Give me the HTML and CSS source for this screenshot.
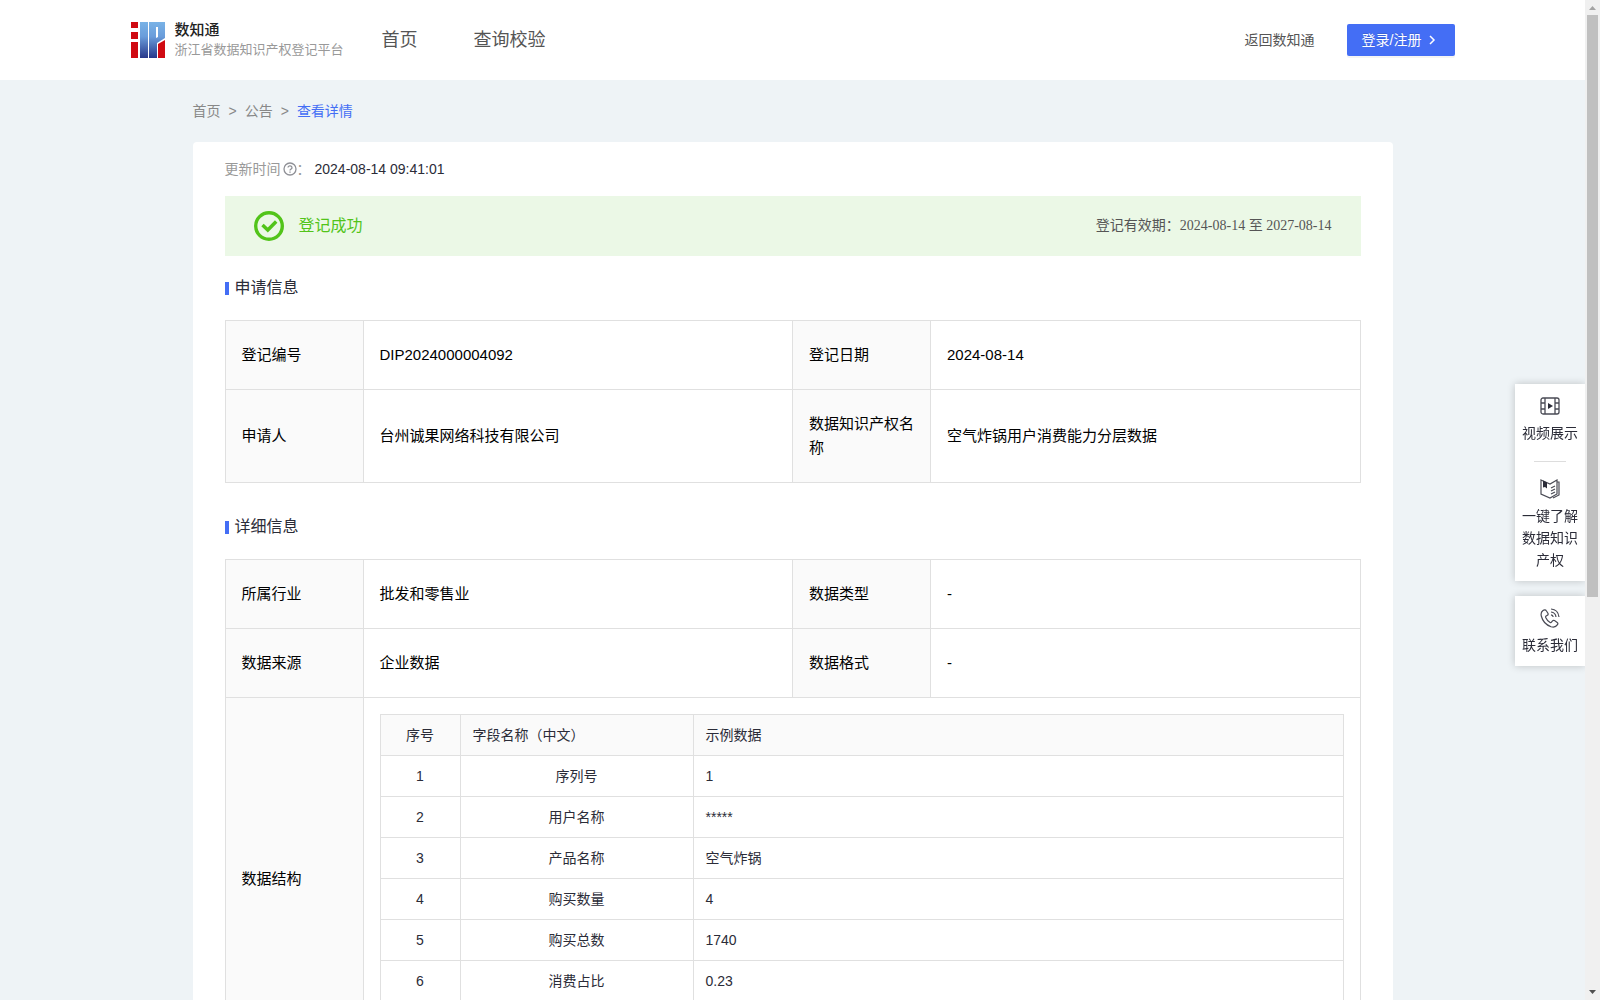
FILE: index.html
```html
<!DOCTYPE html>
<html lang="zh-CN">
<head>
	<meta charset="utf-8">
	<title>浙江省数据知识产权登记平台</title>
	<link rel="stylesheet" href="styles.css">
</head>
<body>
	<div class="page">
		<header class="header">
			<div class="header-inner">
				<a class="logo" href="#">
					<svg class="logo-img" viewBox="0 0 34 36">
						<defs>
							<linearGradient id="blue" x1="0" y1="0" x2="0" y2="36" gradientUnits="userSpaceOnUse">
								<stop offset="0" stop-color="#79b2e6"/>
								<stop offset="0.4" stop-color="#6a9ddb"/>
								<stop offset="1" stop-color="#27378a"/>
							</linearGradient>
						</defs>
						<path fill="#d00a12" d="M0 0h7v6H0zM0 10h7v7H0zM0 20h7v16H0zM34 18v18h-7V22z"/>
						<path fill="url(#blue)" d="M9 0h8v36H9z"/>
						<path fill="url(#blue)" fill-rule="evenodd" d="M18 0h16v16l-8 5v15h-8zM25 5v11l2-1V5z"/>
					</svg>
					<span class="logo-text">
						<strong class="logo-name">数知通</strong>
						<span class="logo-sub">浙江省数据知识产权登记平台</span>
					</span>
				</a>
				<nav class="nav">
					<a href="#">首页</a>
					<a href="#">查询校验</a>
				</nav>
				<div class="header-right">
					<a class="back" href="#">返回数知通</a>
					<button class="login" type="button">登录/注册<svg class="login-arrow" viewBox="0 0 14 14"><path d="M4 3l4 4-4 4" fill="none" stroke="#fff" stroke-width="1.500"/></svg></button>
				</div>
			</div>
		</header>

		<main class="container">
			<nav class="crumb">
				<a href="#">首页</a>
				<span class="sep">&gt;</span>
				<a href="#">公告</a>
				<span class="sep">&gt;</span>
				<a class="current" href="#">查看详情</a>
			</nav>

			<div class="card">
				<div class="update">
					<span class="update-label">更新时间</span>
					<svg class="update-icon" viewBox="0 0 14 14" fill="none" stroke="#8f9096" stroke-width="1.300">
						<circle cx="7" cy="7" r="6"/>
						<path d="M5 5.600a2 1.800 0 1 1 2.700 1.700c-.5.2-.7.400-.7 1.200"/>
						<path d="M7 9.500v1.200"/>
					</svg>
					<span class="update-label">：</span>
					<span class="update-time">2024-08-14 09:41:01</span>
				</div>

				<div class="status">
					<svg class="status-icon" viewBox="0 0 30 30" fill="none" stroke="#52c41a">
						<circle cx="15" cy="15" r="13.300" stroke-width="3.400"/>
						<path d="M8.500 14l5.300 5 8.400-8.500" stroke-width="3.500"/>
					</svg>
					<span class="status-text">登记成功</span>
					<span class="status-date">登记有效期：2024-08-14 至 2027-08-14</span>
				</div>

				<section class="block">
					<h2 class="title">申请信息</h2>
					<table class="info">
						<colgroup><col class="col-label"><col><col class="col-label"><col></colgroup>
						<tr>
							<th>登记编号</th>
							<td>DIP2024000004092</td>
							<th>登记日期</th>
							<td>2024-08-14</td>
						</tr>
						<tr>
							<th>申请人</th>
							<td>台州诚果网络科技有限公司</td>
							<th>数据知识产权名称</th>
							<td>空气炸锅用户消费能力分层数据</td>
						</tr>
					</table>
				</section>

				<section class="block">
					<h2 class="title">详细信息</h2>
					<table class="info">
						<colgroup><col class="col-label"><col><col class="col-label"><col></colgroup>
						<tr>
							<th>所属行业</th>
							<td>批发和零售业</td>
							<th>数据类型</th>
							<td>-</td>
						</tr>
						<tr>
							<th>数据来源</th>
							<td>企业数据</td>
							<th>数据格式</th>
							<td>-</td>
						</tr>
						<tr class="struct-row">
							<th>数据结构</th>
							<td class="struct-cell" colspan="3">
								<table class="struct">
									<thead>
										<tr><th class="num">序号</th><th class="name">字段名称（中文）</th><th>示例数据</th></tr>
									</thead>
									<tbody>
										<tr><td>1</td><td>序列号</td><td>1</td></tr>
										<tr><td>2</td><td>用户名称</td><td>*****</td></tr>
										<tr><td>3</td><td>产品名称</td><td>空气炸锅</td></tr>
										<tr><td>4</td><td>购买数量</td><td>4</td></tr>
										<tr><td>5</td><td>购买总数</td><td>1740</td></tr>
										<tr><td>6</td><td>消费占比</td><td>0.23</td></tr>
									</tbody>
								</table>
							</td>
						</tr>
					</table>
				</section>
			</div>
		</main>
	</div>

	<!-- 右侧悬浮入口 -->
	<aside class="side">
		<div class="side-box">
			<a class="side-item" href="#">
				<svg viewBox="0 0 20 20" fill="none" stroke="#4a4b55" stroke-width="1.300">
					<rect x="1" y="2" width="18" height="16" rx="2"/>
					<path d="M5 2v16M15 2v16M1 7h4M1 13h4M15 7h4M15 13h4"/>
					<path d="M8 7l5 3-5 3z" fill="#2b2c38" stroke="none"/>
				</svg>
				<span>视频展示</span>
			</a>
			<div class="side-line"></div>
			<a class="side-item" href="#">
				<svg viewBox="0 0 20 20" fill="none" stroke="#4a4b55" stroke-width="1.200">
					<path d="M1 1l9 4 7-4v14l-7 4-9-4z"/>
					<path d="M17 3h2v13l-6 3M11 9l4-2M11 12l4-2M11 15l4-2"/>
					<path d="M3 1.500l4 2v6L5 8 3 8.500z" fill="#2b2c38" stroke="none"/>
				</svg>
				<span>一键了解数据知识产权</span>
			</a>
		</div>
		<div class="side-box">
			<a class="side-item" href="#">
				<svg viewBox="0 0 20 20" fill="none" stroke="#4a4b55" stroke-width="1.200">
					<path d="M3 2.500C1 4 .8 6 1.300 8c1.200 5 5 9 9.700 10.700 3 1 5 .3 6.500-2 .6-1 .5-1.700-.3-2.300l-2.700-1.800c-.8-.5-1.500-.4-2 .3l-1 1.300c-.4.500-.9.500-1.400.2-2-1.200-3.500-2.900-4.400-5-.2-.6-.1-1 .4-1.300l1.300-.8c.8-.5.9-1.200.5-2L6.300 2.800C5.700 1.700 4.200 1.600 3 2.500z"/>
					<path d="M11 1c4.500.3 7.500 3.500 8 8M11 4c3 .3 4.700 2.200 5 5M11 6.800c1.300.2 2 1 2.200 2.200"/>
				</svg>
				<span>联系我们</span>
			</a>
		</div>
	</aside>

	<div class="scroll">
		<svg viewBox="0 0 15 15"><path d="M4 10l3.500-4 3.500 4z" fill="#a3a3a3"/></svg>
		<div class="scroll-track"><div class="scroll-thumb"></div></div>
		<svg viewBox="0 0 15 15"><path d="M4 5l3.500 4L11 5z" fill="#505050"/></svg>
	</div>
</body>
</html>
```

FILE: styles.css
```css
*{
	box-sizing: border-box;
}
body{
	margin: 0;
	height: 100vh;
	display: flex;
	font-family: "Liberation Sans", "Noto Sans CJK SC", sans-serif;
	font-size: 14px;
	line-height: 22px;
	color: #2b2c38;
	background: #eef3f6;
}
a{
	color: inherit;
	text-decoration: none;
}
svg{
	display: block;
	flex: none;
}
.page{
	flex: 1;
	min-width: 0;
	overflow-y: auto;
	scrollbar-width: none;
}

/* 顶部 */
.header{
	background: #fff;
}
.header-inner{
	max-width: 1324px;
	height: 80px;
	margin: 0 auto;
	display: flex;
	align-items: center;
}
.logo{
	display: flex;
	align-items: center;
	gap: 10px;
}
.logo-img{
	width: 34px;
	height: 36px;
}
.logo-text{
	display: flex;
	flex-direction: column;
	line-height: 20px;
}
.logo-name{
	font-size: 15px;
	font-weight: 500;
	color: #222;
}
.logo-sub{
	font-size: 13px;
	color: #999;
}
.nav{
	display: flex;
	gap: 56px;
	margin-left: 38px;
	font-size: 18px;
	color: #555;
}
.header-right{
	display: flex;
	align-items: center;
	gap: 32px;
	margin-left: auto;
}
.back{
	color: #555;
}
.login{
	display: flex;
	align-items: center;
	gap: 4px;
	height: 32px;
	padding: 0 15px;
	border: 0;
	border-radius: 2px;
	font: inherit;
	color: #fff;
	background: #446ef5;
	box-shadow: 0 2px 0 rgba(0,0,0,0.045);
	text-shadow: 0 -1px 0 rgba(0,0,0,0.12);
}
.login-arrow{
	width: 14px;
	height: 14px;
}

.container{
	max-width: 1200px;
	margin: 0 auto;
}
.crumb{
	display: flex;
	gap: 8px;
	padding: 20px 0;
	color: #888;
}
.crumb .current{
	color: #446ef5;
}
.card{
	padding: 16px 32px;
	border-radius: 4px;
	background: #fff;
}
.update{
	display: flex;
	align-items: center;
}
.update-label{
	color: #999;
}
.update-icon{
	width: 14px;
	height: 14px;
	margin-left: 2px;
}
.update-time{
	margin-left: 4px;
}
.status{
	display: flex;
	align-items: center;
	height: 60px;
	margin-top: 16px;
	padding: 0 29px;
	background: #ebf8e6;
}
.status-icon{
	width: 30px;
	height: 30px;
	margin-right: 15px;
}
.status-text{
	font-size: 16px;
	color: #52c41a;
}
.status-date{
	margin-left: auto;
	font-family: "Liberation Serif", "Noto Sans CJK SC", serif;
	color: #555;
}

.block + .block{
	padding-top: 12px;
}
.title{
	display: flex;
	align-items: center;
	gap: 6px;
	margin: 0;
	padding: 20px 0;
	font-size: 16px;
	font-weight: normal;
	line-height: 24px;
}
.title::before{
	content: "";
	width: 4px;
	height: 13px;
	background: #446ef5;
}
table{
	width: 100%;
	table-layout: fixed;
	border-collapse: collapse;
}
th,td{
	border: 1px solid #e0e0e0;
	font-weight: normal;
	text-align: left;
}
th{
	background: #fafafa;
}
.col-label{
	width: 138px;
}
.info{
	font-size: 15px;
	line-height: 24px;
	color: #000;
}
.info th,.info td{
	padding: 22px 16px;
}
.struct-row{
	height: 362px;
}
.info .struct-cell{
	padding: 16px;
	vertical-align: top;
}
.struct{
	font-size: 14px;
	line-height: 22px;
	color: #2b2c38;
}
.info .struct th,.info .struct td{
	padding: 9px 12px;
}
.struct .num{
	width: 80px;
	text-align: center;
}
.struct .name{
	width: 233px;
}
.struct td:nth-child(1),.struct td:nth-child(2){
	text-align: center;
}

/* 右侧悬浮 */
.side{
	position: fixed;
	top: 384px;
	right: 15px;
	width: 70px;
	display: flex;
	flex-direction: column;
	gap: 15px;
}
.side-box{
	padding: 12px 7px 10px;
	background: #fff;
	box-shadow: 0 0 8px rgba(0,0,0,0.2);
}
.side-item{
	display: flex;
	flex-direction: column;
	align-items: center;
	gap: 6px;
	text-align: center;
}
.side-item svg{
	width: 20px;
	height: 20px;
}
.side-line{
	width: 32px;
	height: 1px;
	margin: 17px auto;
	background: #ddd;
}

/* 滚动条 */
.scroll{
	position: relative;
	width: 15px;
	display: flex;
	flex-direction: column;
	background: #f0f0f0;
}
.scroll-track{
	flex: 1;
	padding: 0 2px;
}
.scroll-thumb{
	height: 60%;
	background: #c0c0c0;
}
```
